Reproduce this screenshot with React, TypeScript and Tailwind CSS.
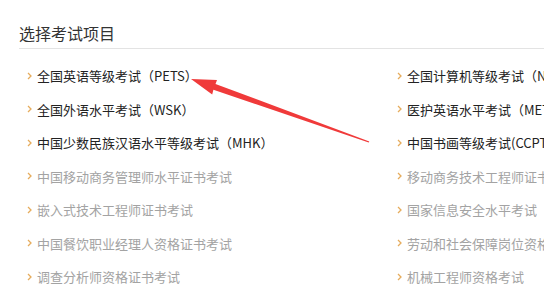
import React from 'react';

type Exam = { name: string; active: boolean };

const leftExams: Exam[] = [
  { name: '全国英语等级考试（PETS）', active: true },
  { name: '全国外语水平考试（WSK）', active: true },
  { name: '中国少数民族汉语水平等级考试（MHK）', active: true },
  { name: '中国移动商务管理师水平证书考试', active: false },
  { name: '嵌入式技术工程师证书考试', active: false },
  { name: '中国餐饮职业经理人资格证书考试', active: false },
  { name: '调查分析师资格证书考试', active: false },
];

const rightExams: Exam[] = [
  { name: '全国计算机等级考试（NCRE）', active: true },
  { name: '医护英语水平考试（METS）', active: true },
  { name: '中国书画等级考试(CCPT)', active: true },
  { name: '移动商务技术工程师证书考试', active: false },
  { name: '国家信息安全水平考试', active: false },
  { name: '劳动和社会保障岗位资格证书考试', active: false },
  { name: '机械工程师资格考试', active: false },
];

const Chevron = () => (
  <svg width="5" height="8" viewBox="0 0 5 8" className="shrink-0">
    <path d="M1 1 L4 4 L1 7" fill="none" stroke="#e6ac5c" strokeWidth="1.3" />
  </svg>
);

const ExamItem = ({ exam }: { exam: Exam }) => (
  <li className="h-[33.5px] flex items-center gap-[5px] whitespace-nowrap">
    <Chevron />
    <span className={exam.active ? 'text-[#222]' : 'text-[#a3a3a3]'}>{exam.name}</span>
  </li>
);

export default function App() {
  return (
    <div
      className="relative w-[544px] h-[295px] overflow-hidden bg-white"
      style={{ fontFamily: '"Noto Sans CJK SC", "Noto Sans", sans-serif' }}
    >
      <div className="pl-[19px]">
        {/* header */}
        <div className="pt-[21px] pb-[3px] border-b border-[#e3e3e3]">
          <h2 className="text-[16px] leading-[24px] text-[#333] font-normal">选择考试项目</h2>
        </div>

        {/* exam list */}
        <div className="flex pt-[10px] pl-[8px] text-[13px]">
          <ul className="w-[370px] shrink-0">
            {leftExams.map((e) => (
              <ExamItem key={e.name} exam={e} />
            ))}
          </ul>
          <ul className="shrink-0">
            {rightExams.map((e) => (
              <ExamItem key={e.name} exam={e} />
            ))}
          </ul>
        </div>
      </div>

      {/* red annotation arrow */}
      <svg className="absolute left-0 top-0 pointer-events-none" width="544" height="295">
        <polygon
          points="191,79 217,80 215.5,84 369.3,141.4 368.7,142.6 213.4,89.8 212.2,94.4"
          fill="#f03a3a"
        />
      </svg>
    </div>
  );
}
